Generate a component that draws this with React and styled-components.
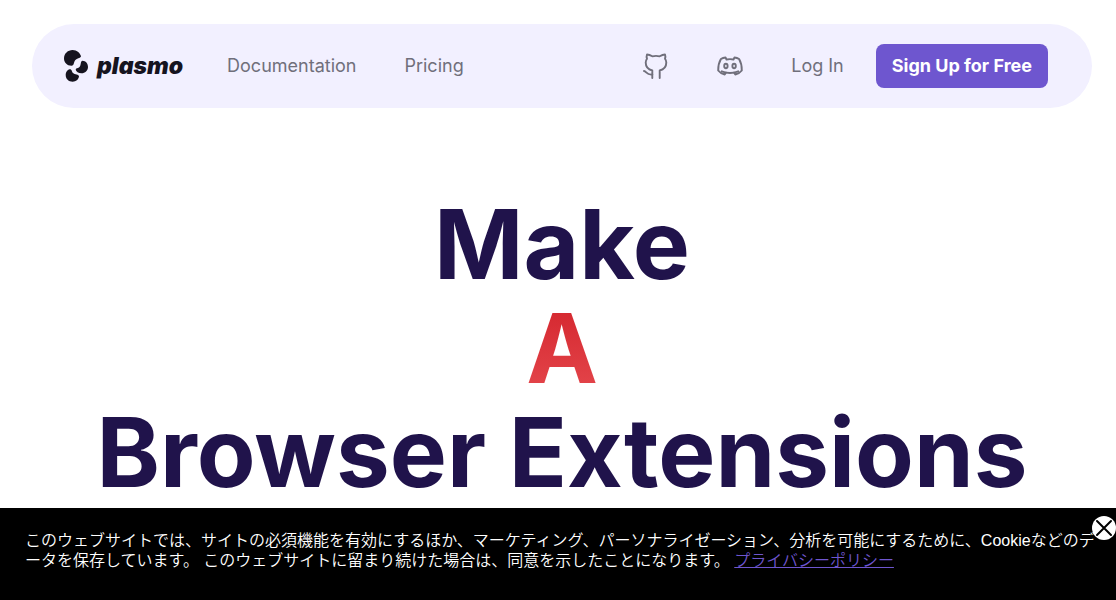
import React from "react";
import styled, { createGlobalStyle } from "styled-components";

const GlobalStyle = createGlobalStyle`
  *, *::before, *::after { box-sizing: border-box; }
  body {
    margin: 0;
    background: #fff;
    font-family: Inter, "Noto Sans CJK JP", sans-serif;
  }
`;

const Page = styled.div`
  min-height: 100vh;
  overflow: hidden;
  padding: 24px 24px 0 32px;
`;

const Header = styled.header`
  display: flex;
  align-items: center;
  justify-content: space-between;
  height: 84px;
  padding: 0 44px 0 32px;
  border-radius: 42px;
  background: #f2f0ff;
`;

const Nav = styled.nav`
  display: flex;
  align-items: center;
  gap: ${(p) => p.$gap}px;
`;

const Logo = styled.a`
  display: flex;
  align-items: center;
  gap: 8px;
  color: #16141f;
  font-size: 23px;
  line-height: 32px;
  font-weight: 900;
  font-style: italic;
  text-decoration: none;
`;

const NavLink = styled.a`
  display: flex;
  color: #706f7b;
  font-size: 18px;
  line-height: 24px;
  text-decoration: none;
`;

const SignUp = styled.button`
  height: 44px;
  padding: 0 16px;
  border: 0;
  border-radius: 8px;
  background: #6e56cf;
  color: #fff;
  font: 700 18px/24px Inter, sans-serif;
`;

const Headline = styled.h1`
  margin: 84px 0 0;
  color: #20134b;
  font-size: 96px;
  line-height: 104px;
  font-weight: 700;
  text-align: center;
`;

const Line = styled.span`
  display: block;
  white-space: nowrap;
`;

const Typed = styled(Line)`
  background: linear-gradient(#d3242c, #e5484d);
  background-clip: text;
  color: transparent;
`;

const Banner = styled.aside`
  position: fixed;
  inset: auto 0 0 0;
  padding: 23px 16px 29px 25px;
  background: #000;
  color: #fff;
  font-family: "Liberation Sans", "Noto Sans CJK JP", sans-serif;
  font-size: 16px;
  font-weight: 350;
  line-height: 20px;
`;

const Notice = styled.p`
  margin: 0;
  line-break: anywhere;
`;

const Policy = styled.a`
  color: #6e56cf;
`;

const Close = styled.button`
  position: absolute;
  top: 8px;
  right: 0;
  display: flex;
  width: 24px;
  height: 24px;
  padding: 0;
  border: 0;
  border-radius: 50%;
  background: #fff;
  color: #000;
`;

const stroke = {
  fill: "none",
  stroke: "currentColor",
  strokeLinecap: "round",
  strokeLinejoin: "round",
  "aria-hidden": true,
};

export default function App() {
  return (
    <>
      <GlobalStyle />
      <Page>
        <Header>
          <Nav $gap={48}>
            <Nav $gap={44}>
              <Logo href="#">
                <svg width="25" height="32" viewBox="0 0 25 32" fill="currentColor" aria-hidden="true">
                  <path d="M8.500 0C13 0 16.500 3.500 17 6.300C16.500 8.500 12.500 8 10.700 11C9.700 13 10 15.700 7.500 15.700C3 15.700 0 12.500 0 8.500C0 3.500 4 0 8.500 0Z" />
                  <path d="M18.500 10.700C21.700 10.700 24 13.500 24 17C24 20.500 21 23.300 17.500 23.300C14.500 23.300 12 21.500 11.700 19.800C11.700 18 13.700 18.500 15.200 17.300C17.500 15.300 16 11 18.500 10.700Z" />
                  <path d="M5.500 19.300C8 19 7.500 21.500 9 23C10.700 24.700 15 24 15 26.500C14.500 29.500 12 31.700 8.700 31.700C4.700 31.700 1.700 29 1.700 25C1.700 22.500 3.500 19.500 5.500 19.300Z" />
                </svg>
                plasmo
              </Logo>
              <NavLink href="#docs">Documentation</NavLink>
            </Nav>
            <NavLink href="#pricing">Pricing</NavLink>
          </Nav>
          <Nav $gap={32}>
            <Nav $gap={48}>
              <NavLink href="#github" aria-label="GitHub">
                <svg width="26" height="26" viewBox="0 0 26 26" strokeWidth="1.9" {...stroke}>
                  <path d="M9.300 25V17.500C5.200 16.500 2.700 14 2.700 9.500C2.700 8 3.200 6.800 4 5.700C3.500 4.300 3.500 2.800 4 1.500C6 1.500 7.500 2.200 9.300 3.300C11.800 2.700 14.200 2.700 16.700 3.300C18.500 2.200 20 1.500 22 1.500C22.500 2.800 22.500 4.300 22 5.700C22.800 6.800 23.300 8 23.300 9.500C23.300 14 20.800 16.500 16.700 17.500V25" />
                  <path d="M1 18C3.500 18.200 3.500 22.300 9.300 21.500" />
                </svg>
              </NavLink>
              <NavLink href="#discord" aria-label="Discord">
                <svg width="26" height="20" viewBox="0 0 26 20" strokeWidth="1.9" {...stroke}>
                  <path d="M4.800 15.300C10 17.500 16 17.500 21.200 15.300" />
                  <path d="M9.500 3.500L8.500 1.500C6.800 1.700 5.300 2.200 3.900 3C2 6.300 1.100 10.300 1.200 14.500C3 16.800 5 18 7.700 18.500L9 16.500M9.500 3.500C11.800 3 14.200 3 16.500 3.500L17.500 1.500C19.200 1.700 20.700 2.200 22.100 3C24 6.300 24.900 10.300 24.800 14.500C23 16.800 21 18 18.300 18.500L17 16.500" />
                  <ellipse cx="8.900" cy="10" rx="1.700" ry="2.200" />
                  <ellipse cx="17.100" cy="10" rx="1.700" ry="2.200" />
                </svg>
              </NavLink>
              <NavLink href="#login">Log In</NavLink>
            </Nav>
            <SignUp type="button">Sign Up for Free</SignUp>
          </Nav>
        </Header>
        <Headline>
          <Line>Make</Line>
          <Typed>A</Typed>
          <Line>Browser Extensions</Line>
        </Headline>
      </Page>
      <Banner>
        <Notice>
          このウェブサイトでは、サイトの必須機能を有効にするほか、マーケティング、パーソナライゼーション、分析を可能にするために、Cookieなどのデータを保存しています。 このウェブサイトに留まり続けた場合は、同意を示したことになります。{" "}
          <Policy href="#privacy">プライバシーポリシー</Policy>
        </Notice>
        <Close type="button" aria-label="Close">
          <svg width="24" height="24" viewBox="0 0 24 24" strokeWidth="2" {...stroke}>
            <path d="M5 5L19 19M19 5L5 19" />
          </svg>
        </Close>
      </Banner>
    </>
  );
}
